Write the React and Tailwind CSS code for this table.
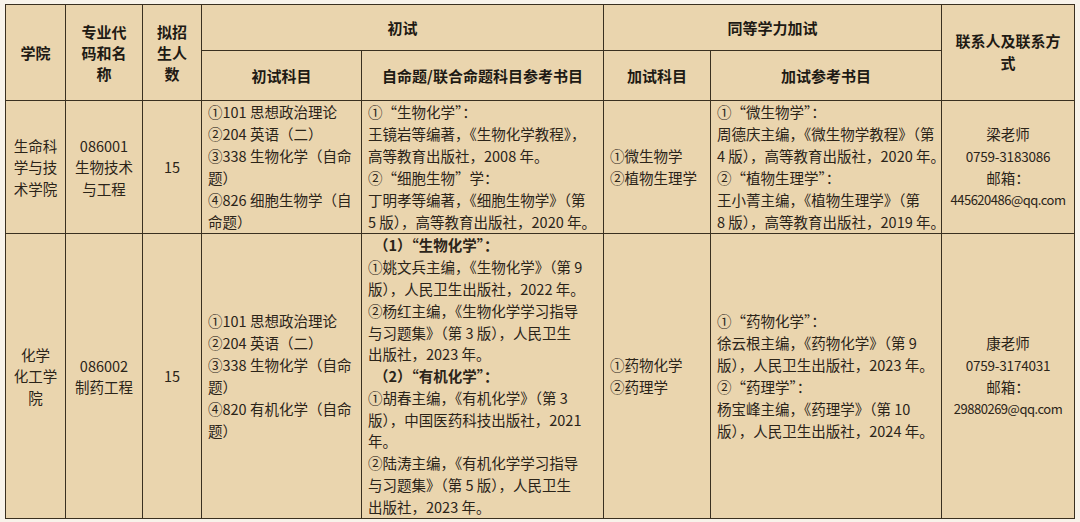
import React from "react";

const font = { fontFamily: '"Noto Sans CJK SC", "Noto Sans", sans-serif' };

function Lines({ lines, className = "" }) {
  return (
    <div className={className}>
      {lines.map((l, i) => (
        <div key={i} className="whitespace-nowrap">{l}</div>
      ))}
    </div>
  );
}

const td = "border border-[#3a3020] align-middle p-0";

function Contact({ name, phone, email }) {
  return (
    <div className="flex flex-col items-center">
      <div>{name}</div>
      <div className="text-[13.5px] tracking-[-0.2px] whitespace-nowrap">{phone}</div>
      <div>邮箱：</div>
      <div className="text-[13px] tracking-[-0.5px] whitespace-nowrap">{email}</div>
    </div>
  );
}

export default function App() {
  return (
    <div className="w-[1080px] h-[522px] bg-[#f8f3ea] pt-[4px] pl-[5px] overflow-hidden" style={font}>
      <table className="w-[1069px] table-fixed border-collapse bg-[#ead5ae] text-[#2b2419] text-[14.5px] leading-[22px]">
        <colgroup>
          <col className="w-[60px]" />
          <col className="w-[77px]" />
          <col className="w-[59px]" />
          <col className="w-[160px]" />
          <col className="w-[242px]" />
          <col className="w-[107px]" />
          <col className="w-[231px]" />
          <col className="w-[133px]" />
        </colgroup>
        <tbody>
          <tr className="h-[46px] font-bold text-[15px] text-[#1e1a14]">
            <td rowSpan={2} className={td + " text-center"}>学院</td>
            <td rowSpan={2} className={td + " text-center leading-[21px]"}>
              <Lines lines={["专业代", "码和名", "称"]} />
            </td>
            <td rowSpan={2} className={td + " text-center leading-[21px]"}>
              <Lines lines={["拟招", "生人", "数"]} />
            </td>
            <td colSpan={2} className={td + " text-center"}>初试</td>
            <td colSpan={2} className={td + " text-center"}>同等学力加试</td>
            <td rowSpan={2} className={td + " text-center leading-[22px] pb-[2px]"}>
              <Lines lines={["联系人及联系方", "式"]} />
            </td>
          </tr>
          <tr className="h-[50px] font-bold text-[15px] text-[#1e1a14]">
            <td className={td + " text-center"}>初试科目</td>
            <td className={td + " text-center"}>自命题/联合命题科目参考书目</td>
            <td className={td + " text-center"}>加试科目</td>
            <td className={td + " text-center"}>加试参考书目</td>
          </tr>
          <tr className="h-[133px]">
            <td className={td + " text-center leading-[21.5px]"}>
              <Lines lines={["生命科", "学与技", "术学院"]} />
            </td>
            <td className={td + " text-center leading-[21.5px]"}>
              <Lines lines={["086001", "生物技术", "与工程"]} />
            </td>
            <td className={td + " text-center"}>15</td>
            <td className={td + " pl-[6px]"}>
              <Lines
                lines={[
                  "①101 思想政治理论",
                  "②204 英语（二）",
                  "③338 生物化学（自命",
                  "题）",
                  "④826 细胞生物学（自",
                  "命题）",
                ]}
              />
            </td>
            <td className={td + " pl-[6px]"}>
              <Lines
                lines={[
                  "①“生物化学”：",
                  "王镜岩等编著，《生物化学教程》，",
                  "高等教育出版社，2008 年。",
                  "②“细胞生物”学：",
                  "丁明孝等编著，《细胞生物学》（第",
                  "5 版），高等教育出版社，2020 年。",
                ]}
              />
            </td>
            <td className={td + " pl-[6px]"}>
              <Lines lines={["①微生物学", "②植物生理学"]} />
            </td>
            <td className={td + " pl-[6px]"}>
              <Lines
                lines={[
                  "①“微生物学”：",
                  "周德庆主编，《微生物学教程》（第",
                  "4 版），高等教育出版社，2020 年。",
                  "②“植物生理学”：",
                  "王小菁主编，《植物生理学》（第",
                  "8 版），高等教育出版社，2019 年。",
                ]}
              />
            </td>
            <td className={td + " text-center"}>
              <Contact name="梁老师" phone="0759-3183086" email="445620486@qq.com" />
            </td>
          </tr>
          <tr className="h-[285px]">
            <td className={td + " text-center leading-[21.5px]"}>
              <Lines lines={["化学", "化工学", "院"]} />
            </td>
            <td className={td + " text-center leading-[21.5px]"}>
              <Lines lines={["086002", "制药工程"]} />
            </td>
            <td className={td + " text-center"}>15</td>
            <td className={td + " pl-[6px]"}>
              <Lines
                lines={[
                  "①101 思想政治理论",
                  "②204 英语（二）",
                  "③338 生物化学（自命",
                  "题）",
                  "④820 有机化学（自命",
                  "题）",
                ]}
              />
            </td>
            <td className={td + " pl-[6px] leading-[21.8px]"}>
              <div className="whitespace-nowrap font-bold pl-[6px]">（1）“生物化学”：</div>
              <Lines
                lines={[
                  "①姚文兵主编，《生物化学》（第 9",
                  "版），人民卫生出版社，2022 年。",
                  "②杨红主编，《生物化学学习指导",
                  "与习题集》（第 3 版），人民卫生",
                  "出版社，2023 年。",
                ]}
              />
              <div className="whitespace-nowrap font-bold pl-[6px]">（2）“有机化学”：</div>
              <Lines
                lines={[
                  "①胡春主编，《有机化学》（第 3",
                  "版），中国医药科技出版社，2021",
                  "年。",
                  "②陆涛主编，《有机化学学习指导",
                  "与习题集》（第 5 版），人民卫生",
                  "出版社，2023 年。",
                ]}
              />
            </td>
            <td className={td + " pl-[6px]"}>
              <Lines lines={["①药物化学", "②药理学"]} />
            </td>
            <td className={td + " pl-[6px]"}>
              <Lines
                lines={[
                  "①“药物化学”：",
                  "徐云根主编，《药物化学》（第 9",
                  "版），人民卫生出版社，2023 年。",
                  "②“药理学”：",
                  "杨宝峰主编，《药理学》（第 10",
                  "版），人民卫生出版社，2024 年。",
                ]}
              />
            </td>
            <td className={td + " text-center"}>
              <Contact name="康老师" phone="0759-3174031" email="29880269@qq.com" />
            </td>
          </tr>
        </tbody>
      </table>
    </div>
  );
}
